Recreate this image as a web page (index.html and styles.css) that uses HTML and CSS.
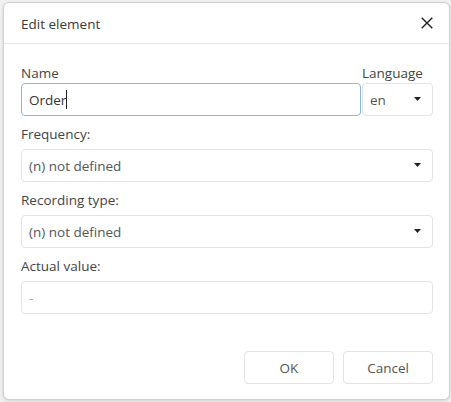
FILE: index.html
```html
<!DOCTYPE html>
<html lang="en">
<head>
<meta charset="utf-8">
<title>Edit element</title>
<link rel="stylesheet" href="styles.css">
</head>
<body>
<div class="dialog">
  <div class="header">
    <h1 class="title">Edit element</h1>
    <button class="close" aria-label="Close">
      <svg width="12" height="12" viewBox="0 0 12 12"><path d="M0.7 0.7 L11.3 11.3 M11.3 0.7 L0.7 11.3" stroke="#1f1f1f" stroke-width="1.4" fill="none"/></svg>
    </button>
  </div>
  <div class="body">
    <div class="name-row">
      <div class="group name-group">
        <label class="label">Name</label>
        <div class="control focused"><span class="value dark">Order</span><span class="caret"></span></div>
      </div>
      <div class="group lang-group">
        <label class="label">Language</label>
        <div class="control select"><span class="value">en</span><svg class="arrow" width="7" height="4" viewBox="0 0 7 4"><path d="M0 0 H7 L3.5 4 Z" fill="#222"/></svg></div>
      </div>
    </div>
    <div class="group">
      <label class="label spaced">Frequency:</label>
      <div class="control select"><span class="value">(n) not defined</span><svg class="arrow" width="7" height="4" viewBox="0 0 7 4"><path d="M0 0 H7 L3.5 4 Z" fill="#222"/></svg></div>
    </div>
    <div class="group">
      <label class="label spaced">Recording type:</label>
      <div class="control select"><span class="value">(n) not defined</span><svg class="arrow" width="7" height="4" viewBox="0 0 7 4"><path d="M0 0 H7 L3.5 4 Z" fill="#222"/></svg></div>
    </div>
    <div class="group">
      <label class="label spaced">Actual value:</label>
      <div class="control"><span class="value muted">-</span></div>
    </div>
  </div>
  <div class="footer">
    <button class="btn">OK</button>
    <button class="btn">Cancel</button>
  </div>
</div>
</body>
</html>
```
FILE: styles.css
```css
html, body {
  margin: 0;
  height: 402px;
}
body {
  background: #f0f0f0;
  padding: 2px 1px 2px 3px;
  box-sizing: border-box;
  font-family: "Open Sans", "Noto Sans", sans-serif;
  font-size: 13.5px;
  color: #333;
}
.dialog {
  width: 447px;
  height: 398px;
  box-sizing: border-box;
  background: #fff;
  border: 1px solid #cfcfcf;
  border-radius: 6px;
  box-shadow: 0 1px 3px rgba(0,0,0,0.12);
  display: flex;
  flex-direction: column;
}
.header {
  display: flex;
  align-items: flex-start;
  justify-content: space-between;
  padding: 11px 16px 9px 17px;
  border-bottom: 1px solid #e6e6e6;
}
.title {
  margin: 0;
  font-size: 13.5px;
  font-weight: normal;
  line-height: 20px;
  color: #3a3a3a;
}
.close {
  border: 0;
  background: none;
  padding: 0;
  margin-top: 3px;
  width: 12px;
  height: 12px;
  display: flex;
}
.body {
  padding: 20px 16px 0 17px;
  display: flex;
  flex-direction: column;
  gap: 9px;
}
.name-row {
  display: flex;
  gap: 1px;
}
.group {
  display: flex;
  flex-direction: column;
}
.name-group { flex: 1; }
.lang-group { width: 71px; }
.label {
  line-height: 19px;
  color: #444;
}
.label.spaced { margin-bottom: 5px; }
.control {
  height: 33px;
  box-sizing: border-box;
  border: 1px solid #e1e3e6;
  border-radius: 4px;
  padding: 0 11px 0 7px;
  display: flex;
  align-items: center;
  line-height: 20px;
  color: #555;
}
.control.focused {
  border-color: #8db6df;
}
.select {
  justify-content: space-between;
}
.arrow {
  margin-top: -1px;
}
.value.dark { color: #333; }
.value.muted { color: #9a9a9a; }
.caret {
  display: inline-block;
  width: 1px;
  height: 19px;
  background: #222;
  margin-left: 0;
}
.footer {
  margin-top: auto;
  display: flex;
  justify-content: flex-end;
  gap: 9px;
  padding: 0 16px 15px 17px;
}
.btn {
  width: 90px;
  height: 33px;
  box-sizing: border-box;
  background: #fff;
  border: 1px solid #e1e3e6;
  border-radius: 4px;
  font-family: "Open Sans", "Noto Sans", sans-serif;
  font-size: 13.5px;
  color: #555;
  padding: 0;
}
```
